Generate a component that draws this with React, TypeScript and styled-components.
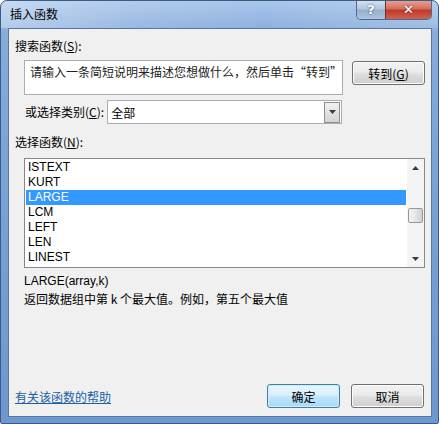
import React from 'react'
import styled, { createGlobalStyle } from 'styled-components'

const GlobalStyle = createGlobalStyle`
  html, body { margin: 0; padding: 0; background: #ffffff; }
  body {
    font-family: "Noto Sans", "Noto Sans CJK SC", sans-serif;
    font-size: 12px;
    color: #000;
  }
`

const CJK = `"Noto Sans CJK SC", "Noto Sans", sans-serif`
const LATIN = `"Liberation Sans", "Noto Sans CJK SC", sans-serif`

const functions = ['ISTEXT', 'KURT', 'LARGE', 'LCM', 'LEFT', 'LEN', 'LINEST']

const Window = styled.div`
  width: 439px;
  height: 424px;
  box-sizing: border-box;
  border: 1px solid #3c5a82;
  border-radius: 7px 7px 2px 2px;
  background: linear-gradient(180deg, #a9c6ea 0%, #86acdc 8%, #7aa3d6 40%, #6d98cf 100%);
  display: flex;
  flex-direction: column;
  overflow: hidden;
`

const TitleBar = styled.div`
  height: 27px;
  display: flex;
  align-items: flex-start;
  padding-left: 9px;
  background: linear-gradient(90deg, rgba(255,255,255,0.35) 0%, rgba(255,255,255,0.1) 30%, rgba(255,255,255,0.0) 60%, rgba(255,255,255,0.15) 100%);
`

const Title = styled.div`
  font-family: ${CJK};
  font-size: 12px;
  line-height: 26px;
  color: #000;
  flex: 1;
`

const CaptionButtons = styled.div`
  display: flex;
  margin-right: 6px;
  margin-top: -1px;
  border: 1px solid #4a6a94;
  border-top: none;
  border-radius: 0 0 5px 5px;
  overflow: hidden;
  height: 19px;
`

const CaptionButton = styled.div<{ $close?: boolean }>`
  width: ${({ $close }) => ($close ? '45px' : '28px')};
  height: 19px;
  display: flex;
  align-items: center;
  justify-content: center;
  color: #fff;
  font-family: "DejaVu Sans", sans-serif;
  font-weight: bold;
  font-size: 13px;
  text-shadow: 0 0 2px #333;
  border-left: ${({ $close }) => ($close ? '1px solid #6d3030' : 'none')};
  background: ${({ $close }) =>
    $close
      ? 'linear-gradient(180deg, #e8a59a 0%, #d4705f 45%, #c0392b 55%, #d0624e 100%)'
      : 'linear-gradient(180deg, #d7e3f1 0%, #b3c7df 45%, #98b0cf 55%, #aec3de 100%)'};
`

const Client = styled.div`
  flex: 1;
  margin: 0 6px 6px 7px;
  background: #f0f0f0;
  border: 1px solid #5a7699;
  display: flex;
  flex-direction: column;
  padding: 9px 0 0 6px;
`

const Label = styled.div`
  font-family: ${CJK};
  font-size: 12px;
  line-height: 16px;
  height: 16px;
  color: #000;
  u { text-decoration: underline; }
`

const SearchRow = styled.div`
  display: flex;
  align-items: flex-start;
  gap: 9px;
  margin: 6px 0 0 9px;
`

const SearchBox = styled.div`
  width: 319px;
  height: 35px;
  box-sizing: border-box;
  background: #fff;
  border: 1px solid #abadb3;
  padding: 3px 0 0 5px;
  font-family: ${CJK};
  font-size: 12px;
  line-height: 16px;
  color: #222;
  white-space: nowrap;
  overflow: hidden;
`

const Button = styled.div<{ $default?: boolean }>`
  width: 73px;
  height: 24px;
  box-sizing: border-box;
  margin-top: 1px;
  border: 1px solid ${({ $default }) => ($default ? '#3c7fb1' : '#707070')};
  border-radius: 3px;
  background: ${({ $default }) =>
    $default
      ? 'linear-gradient(180deg, #eaf6fd 0%, #d9f0fc 45%, #bee6fd 55%, #a7d9f5 100%)'
      : 'linear-gradient(180deg, #f2f2f2 0%, #ebebeb 45%, #dddddd 55%, #cfcfcf 100%)'};
  box-shadow: inset 0 0 0 1px ${({ $default }) => ($default ? '#d0ecfb' : '#fcfcfc')};
  display: flex;
  align-items: center;
  justify-content: center;
  font-family: ${CJK};
  font-size: 12px;
  color: #000;
  u { text-decoration: underline; }
`

const CategoryRow = styled.div`
  display: flex;
  align-items: center;
  margin: 5px 0 0 10px;
  gap: 3px;
`

const Combo = styled.div`
  width: 235px;
  height: 24px;
  box-sizing: border-box;
  background: #fff;
  border: 1px solid #abadb3;
  display: flex;
  align-items: center;
  padding-left: 3px;
  font-family: ${CJK};
  font-size: 12px;
`

const ComboText = styled.div`
  flex: 1;
`

const ComboArrow = styled.div`
  width: 16px;
  height: 21px;
  margin-right: 1px;
  box-sizing: border-box;
  border: 1px solid #8f8f8f;
  background: linear-gradient(180deg, #f2f2f2 0%, #e3e3e3 50%, #d4d4d4 100%);
  display: flex;
  align-items: center;
  justify-content: center;
`

const ListLabel = styled(Label)`
  margin-top: 10px;
`

const ListBox = styled.div`
  width: 401px;
  height: 110px;
  box-sizing: border-box;
  margin: 8px 0 0 9px;
  background: #fff;
  border: 1px solid #828790;
  display: flex;
`

const Items = styled.div`
  flex: 1;
  padding: 1px 1px 0 1px;
  overflow: hidden;
`

const Item = styled.div<{ $selected?: boolean }>`
  height: 15px;
  line-height: 15px;
  padding-left: 2px;
  font-family: ${LATIN};
  font-size: 12px;
  color: ${({ $selected }) => ($selected ? '#ffffff' : '#000')};
  background: ${({ $selected }) => ($selected ? '#3399ff' : 'transparent')};
`

const ScrollBar = styled.div`
  width: 17px;
  background: #f4f4f4;
  display: flex;
  flex-direction: column;
  align-items: center;
`

const ScrollArrow = styled.div`
  height: 17px;
  width: 17px;
  display: flex;
  align-items: center;
  justify-content: center;
`

const Track = styled.div`
  flex: 1;
  width: 100%;
  padding-top: 32px;
  box-sizing: border-box;
  display: flex;
  justify-content: center;
`

const Thumb = styled.div`
  width: 15px;
  height: 15px;
  box-sizing: border-box;
  border: 1px solid #979797;
  border-radius: 2px;
  background: linear-gradient(90deg, #f3f3f3 0%, #e6e6e6 50%, #d0d0d0 100%);
`

const Syntax = styled.div`
  margin: 4px 0 0 9px;
  font-family: ${LATIN};
  font-size: 12px;
  line-height: 18px;
`

const Description = styled.div`
  margin-left: 9px;
  font-family: ${CJK};
  font-size: 12px;
  line-height: 18px;
`

const Footer = styled.div`
  margin-top: auto;
  display: flex;
  align-items: center;
  padding: 0 7px 8px 0;
  gap: 11px;
`

const HelpLink = styled.a`
  flex: 1;
  font-family: ${CJK};
  font-size: 12px;
  color: #1a5fa3;
  text-decoration: underline;
  margin-top: 2px;
`

const Arrow = ({ up }: { up?: boolean }) => (
  <svg width="7" height="4" viewBox="0 0 7 4">
    <polygon points={up ? '0,4 7,4 3.5,0' : '0,0 7,0 3.5,4'} fill="#3c3c3c" />
  </svg>
)

export default function App() {
  return (
    <>
      <GlobalStyle />
      <Window>
        <TitleBar>
          <Title>插入函数</Title>
          <CaptionButtons>
            <CaptionButton>?</CaptionButton>
            <CaptionButton $close>✕</CaptionButton>
          </CaptionButtons>
        </TitleBar>
        <Client>
          <Label>
            搜索函数(<u>S</u>):
          </Label>
          <SearchRow>
            <SearchBox>请输入一条简短说明来描述您想做什么，然后单击“转到”</SearchBox>
            <Button>
              转到(<u>G</u>)
            </Button>
          </SearchRow>
          <CategoryRow>
            <Label>
              或选择类别(<u>C</u>):
            </Label>
            <Combo>
              <ComboText>全部</ComboText>
              <ComboArrow>
                <Arrow />
              </ComboArrow>
            </Combo>
          </CategoryRow>
          <ListLabel>
            选择函数(<u>N</u>):
          </ListLabel>
          <ListBox>
            <Items>
              {functions.map((f) => (
                <Item key={f} $selected={f === 'LARGE'}>
                  {f}
                </Item>
              ))}
            </Items>
            <ScrollBar>
              <ScrollArrow>
                <Arrow up />
              </ScrollArrow>
              <Track>
                <Thumb />
              </Track>
              <ScrollArrow>
                <Arrow />
              </ScrollArrow>
            </ScrollBar>
          </ListBox>
          <Syntax>LARGE(array,k)</Syntax>
          <Description>返回数据组中第 k 个最大值。例如，第五个最大值</Description>
          <Footer>
            <HelpLink>有关该函数的帮助</HelpLink>
            <Button $default>确定</Button>
            <Button>取消</Button>
          </Footer>
        </Client>
      </Window>
    </>
  )
}
